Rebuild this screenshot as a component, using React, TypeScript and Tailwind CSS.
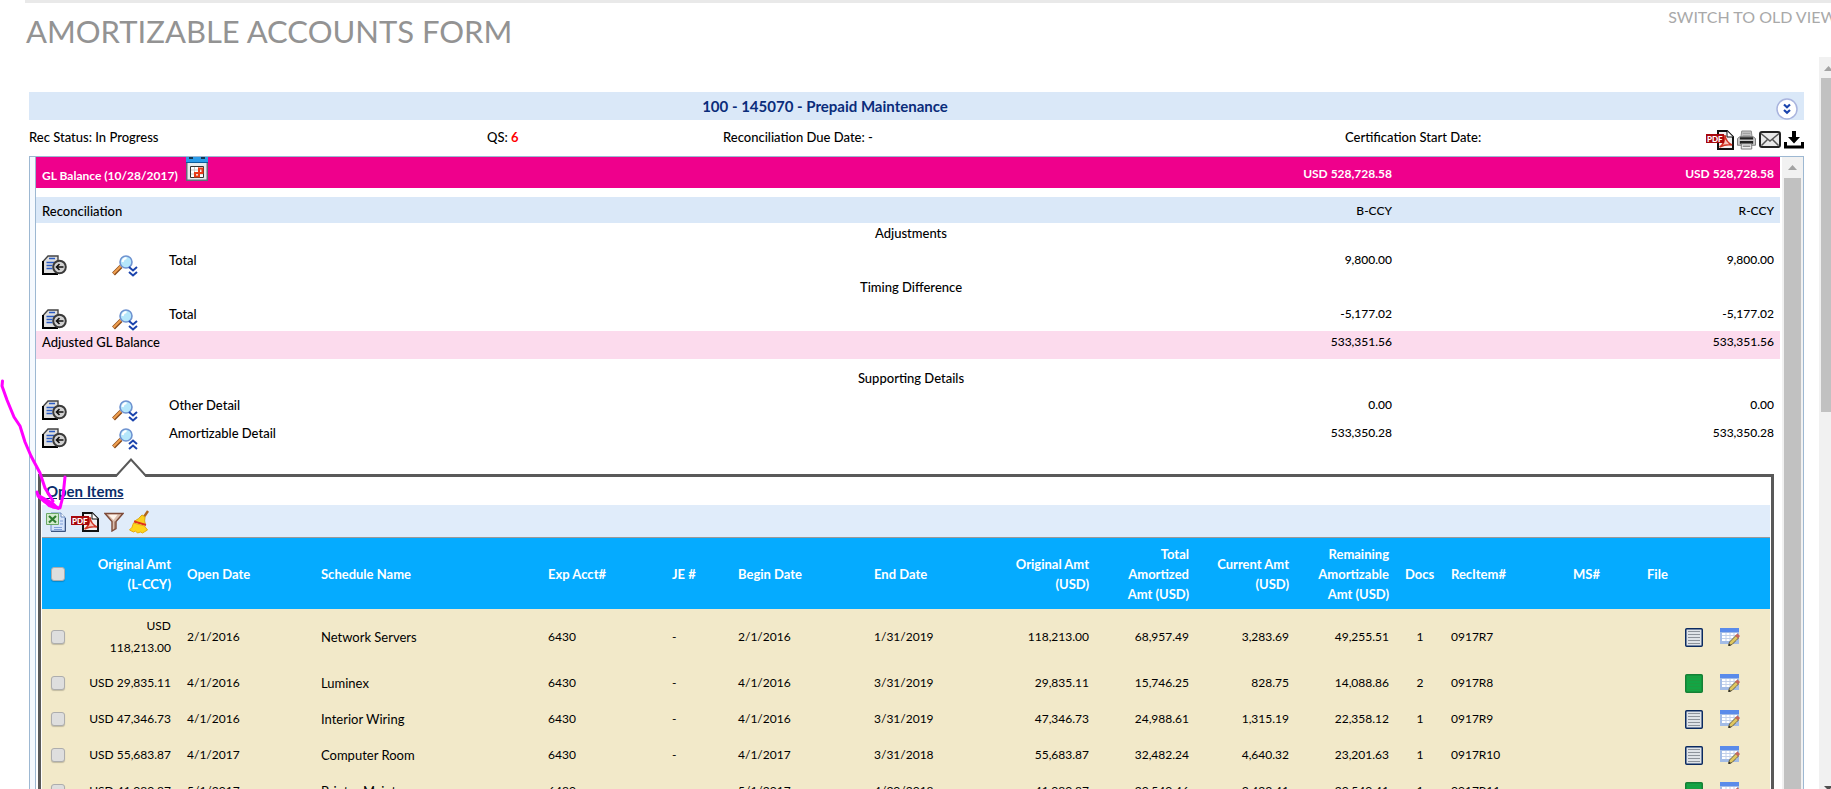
import { ReactNode } from 'react'

interface OpenItem {
  original: string
  openDate: string
  schedule: string
  account: string
  begin: string
  end: string
  originalUsd: string
  amortized: string
  current: string
  remaining: string
  docs: number
  recItem: string
  flagged?: boolean
}

const openItems: OpenItem[] = [
  { original: '118,213.00', openDate: '2/1/2016', schedule: 'Network Servers', account: '6430', begin: '2/1/2016', end: '1/31/2019', originalUsd: '118,213.00', amortized: '68,957.49', current: '3,283.69', remaining: '49,255.51', docs: 1, recItem: '0917R7' },
  { original: '29,835.11', openDate: '4/1/2016', schedule: 'Luminex', account: '6430', begin: '4/1/2016', end: '3/31/2019', originalUsd: '29,835.11', amortized: '15,746.25', current: '828.75', remaining: '14,088.86', docs: 2, recItem: '0917R8', flagged: true },
  { original: '47,346.73', openDate: '4/1/2016', schedule: 'Interior Wiring', account: '6430', begin: '4/1/2016', end: '3/31/2019', originalUsd: '47,346.73', amortized: '24,988.61', current: '1,315.19', remaining: '22,358.12', docs: 1, recItem: '0917R9' },
  { original: '55,683.87', openDate: '4/1/2017', schedule: 'Computer Room', account: '6430', begin: '4/1/2017', end: '3/31/2018', originalUsd: '55,683.87', amortized: '32,482.24', current: '4,640.32', remaining: '23,201.63', docs: 1, recItem: '0917R10' },
  { original: '41,080.87', openDate: '5/1/2017', schedule: 'Printer Maint', account: '6480', begin: '5/1/2017', end: '4/30/2018', originalUsd: '41,080.87', amortized: '20,540.46', current: '3,423.41', remaining: '20,540.41', docs: 1, recItem: '0917R11', flagged: true },
]

function IconButton({ label, children }: { label: string; children: ReactNode }) {
  return (
    <button type="button" aria-label={label} className="block shrink-0 cursor-pointer">
      {children}
    </button>
  )
}

function PdfIcon() {
  return (
    <svg width="28" height="20" viewBox="0 0 28 20">
      <path d="M12 1h9l6 6v12H12z" fill="#f1f1f1" stroke="#111" strokeWidth="2" />
      <path d="M21 1v6h6" fill="#fff" stroke="#111" />
      <path d="M13.500 17c3.500-2 5.500-6 5.500-12 .5 5 3 8 7 10-5-1-8 0-12.500 2z" fill="#f7c4bb" stroke="#cf3423" strokeWidth="1.600" />
      <path d="M0 4h18v9H0z" fill="#a8090d" />
      <text x="1" y="11.500" fill="#fff" fontSize="8" fontWeight="900">PDF</text>
    </svg>
  )
}

function PrinterIcon() {
  return (
    <svg width="19" height="20" viewBox="0 0 20 20">
      <path d="M5 .5h10l1 7H4z" fill="#c4c4c4" stroke="#8a8a8a" />
      <path d="M6 3h8M6 5.500h8" stroke="#999" />
      <path d="M.5 8.500L3 6.500h14l2.500 2v7H.5z" fill="#c9c9c9" stroke="#777" />
      <path d="M3 7h14v2.500H3zM3 11h14v3H3z" fill="#222" />
      <path d="M4.500 14h11v5.500h-11z" fill="#f0f0f0" stroke="#777" />
      <path d="M6 16.500h8" stroke="#555" />
    </svg>
  )
}

function MailIcon() {
  return (
    <svg width="22" height="18" viewBox="0 0 22 18">
      <rect x="1" y="1" width="20" height="15" rx="2" fill="#e9e9e9" stroke="#222" strokeWidth="2" />
      <path d="M2 2.500l9 7.500 9-7.500M2.500 14.500l6-6M19.500 14.500l-6-6" fill="none" stroke="#555" strokeWidth="1.500" />
    </svg>
  )
}

function DownloadIcon() {
  return (
    <svg width="20" height="18" viewBox="0 0 20 18">
      <path d="M8 0h4v6h4l-6 6.500L4 6h4z" fill="#000" />
      <path d="M1.500 11v5h17v-5" fill="none" stroke="#000" strokeWidth="3" />
    </svg>
  )
}

function ExpandIcon() {
  return (
    <svg width="22" height="22" viewBox="0 0 22 22">
      <circle cx="11" cy="11" r="10" fill="#fff" stroke="#a9b4de" strokeWidth="1.500" />
      <path d="M8 6.500l3 2.800 3-2.800M8 12l3 2.800 3-2.800" fill="none" stroke="#1b44ad" strokeWidth="2.200" />
    </svg>
  )
}

function CalendarIcon() {
  return (
    <svg width="22" height="24" viewBox="0 0 22 24">
      <path d="M0 5h22v19H0z" fill="#5f6e78" />
      <path d="M1.500 6h19v16.500h-19z" fill="#e6ebee" />
      <path d="M0 0h22v5H0z" fill="#2b9be8" />
      <path d="M0 5.500h22" stroke="#0b5c9c" />
      <path d="M3 1h4M15 1h4" stroke="#14364f" strokeWidth="2" />
      <path d="M4.500 9.500h13v11h-13z" fill="#fff" stroke="#333" />
      <path d="M5 13h12M5 17h12M8.500 10v10M12.500 10v10" stroke="#c8c8c8" />
      <path d="M9 16h4v3.500H9zM13 11.500h3.500V16H13z" fill="none" stroke="#ea3a16" strokeWidth="2" />
    </svg>
  )
}

function ReturnDocIcon() {
  return (
    <svg width="25" height="21" viewBox="0 0 25 21">
      <path d="M1 19V6l5-5h10v5l-2 13z" fill="#dedede" />
      <path d="M1 19V6.500L6 1h10v5" fill="none" stroke="#444" strokeWidth="1.400" />
      <path d="M1 6v13h15" fill="none" stroke="#000" strokeWidth="2" />
      <path d="M7 3.500h6M4.500 7.500h8M4.500 10.500h6M4.500 13.500h6" stroke="#2b5cc4" strokeWidth="1.500" />
      <circle cx="17.500" cy="12" r="6.300" fill="#d2d2d2" stroke="#3a3a3a" strokeWidth="2" />
      <path d="M21.500 12h-7M17.500 9L14.500 12l3 3" fill="none" stroke="#111" strokeWidth="1.600" />
    </svg>
  )
}

function MagnifierIcon({ up }: { up?: boolean }) {
  return (
    <svg width="26" height="22" viewBox="0 0 26 22">
      <path d="M1.500 19L9 11.500" stroke="#8a4b1b" strokeWidth="4" />
      <path d="M1.500 18.500L9 11" stroke="#f0a050" strokeWidth="2.200" />
      <circle cx="14" cy="7" r="6" fill="#b5e7fb" stroke="#6f93d0" strokeWidth="1.600" />
      <path d="M10.500 7q.5-3.500 4-4" fill="none" stroke="#fff" strokeWidth="2" />
      {up ? (
        <path d="M17 16l4-3.500 4 3.500M17 21l4-3.500 4 3.500" fill="none" stroke="#1b44ad" strokeWidth="2" />
      ) : (
        <path d="M17 12l4 3.500 4-3.500M17 17l4 3.500 4-3.500" fill="none" stroke="#1b44ad" strokeWidth="2" />
      )}
    </svg>
  )
}

function ExcelIcon() {
  return (
    <svg width="20" height="20" viewBox="0 0 20 20">
      <path d="M5 1h10l4 4v14H5z" fill="#d5e3fa" stroke="#6b8abf" />
      <path d="M19.500 6v13.500H5" fill="none" stroke="#3d5580" />
      <path d="M15 1v4h4" fill="#fff" stroke="#6b8abf" />
      <path d="M8 15.500h8M8 17.500h8M14 9h3M14 12h3" stroke="#7f9fd8" />
      <path d="M.5 1.500h12v11H.5z" fill="#d4ecce" stroke="#6aa865" />
      <path d="M3 4l7 6.500M10 4l-7 6.500" stroke="#2e7d2f" strokeWidth="2.200" />
    </svg>
  )
}

function FilterIcon() {
  return (
    <svg width="20" height="20" viewBox="0 0 20 20">
      <path d="M1 1.500h18l-7 8v7l-4 2.500V9.500z" fill="#dcc0b0" stroke="#7d4a38" strokeWidth="1.400" />
      <path d="M4.500 2.700h9L9.500 8z" fill="#fff3ea" />
      <path d="M11 9.500V17" stroke="#8b5a48" />
    </svg>
  )
}

function BroomIcon() {
  return (
    <svg width="20" height="24" viewBox="0 0 20 24">
      <path d="M19 1l-4.500 6.500" stroke="#b0651d" strokeWidth="2.400" />
      <path d="M13 5q2 .5 3 2.500-1 3 .5 7.500L5 11.500Q10 9 13 5z" fill="#fbd01c" stroke="#dda70d" />
      <path d="M5 11.500l12 3.500" stroke="#e1301b" strokeWidth="2" />
      <path d="M4.500 13q-1 5-4 7l4 2 2-1 2 2 3-1 2 1 5-3-3-4z" fill="#ffd51c" stroke="#e7ac0c" />
    </svg>
  )
}

function NoteIcon({ flagged }: { flagged?: boolean }) {
  return (
    <svg width="18" height="19" viewBox="0 0 18 19">
      <rect x=".75" y=".75" width="16.500" height="17.500" rx="1" fill={flagged ? '#13a544' : '#dfe3e8'} stroke={flagged ? '#168035' : '#0b2a60'} strokeWidth="1.500" />
      <path
        d="M3 3.500h12M3 6.500h12M3 9.500h12M3 12.500h12M3 15.500h12"
        stroke={flagged ? '#1e9c40' : '#8d939b'}
      />
    </svg>
  )
}

function EditIcon() {
  return (
    <svg width="20" height="20" viewBox="0 0 20 20">
      <path d="M0 1h19v16H0z" fill="#a3bce6" />
      <path d="M0 1h19v4H0z" fill="#5a8bea" />
      <path d="M2 6h15v8H2z" fill="#fff" />
      <path d="M2 8.500h15M2 11.500h15M6 6v8M10 6v8M14 6v8" stroke="#c3d1ea" />
      <path d="M8.500 18.500l1-3.500 6.500-6.500 2.500 2.500-6.500 6.500z" fill="#e0c75e" stroke="#6b6342" />
      <path d="M15 8.500l2.500-2 2.500 2.500-2 2.500z" fill="#c5675c" />
      <path d="M8.500 19l.5-2.500 2 2z" fill="#222" />
    </svg>
  )
}

function Check({ label }: { label: string }) {
  return (
    <input
      type="checkbox"
      aria-label={label}
      className="mx-auto block size-[14px] appearance-none rounded-[3px] border border-[#adadad] bg-[#dedede] shadow-[0_1px_1px_rgba(0,0,0,0.2)]"
    />
  )
}

function SectionRow({ title }: { title: string }) {
  return (
    <tr className="h-[27px]">
      <td colSpan={5} className="pl-1.5 text-center text-[13px]">{title}</td>
    </tr>
  )
}

function DetailRow({ title, base, reporting, open }: { title: string; base: string; reporting: string; open?: boolean }) {
  return (
    <tr className="h-[27px]">
      <td className="pl-1.5">
        <div className="h-[27px] pt-[5px]">
          <IconButton label={`Back to ${title}`}><ReturnDocIcon /></IconButton>
        </div>
      </td>
      <td className="pl-1.5">
        <div className="h-[27px] pt-[5px]">
          <IconButton label={`Show ${title}`}><MagnifierIcon up={open} /></IconButton>
        </div>
      </td>
      <td className="pl-1.5 text-[13px]">{title}</td>
      <td className="pr-1.5 text-right">{base}</td>
      <td className="pr-1.5 text-right">{reporting}</td>
    </tr>
  )
}

function Summary() {
  return (
    <table className="w-full table-fixed border-collapse text-left leading-5 font-medium [&_td]:align-top [&_th]:font-medium">
      <colgroup>
        <col className="w-[70px]" />
        <col className="w-[57px]" />
        <col />
        <col className="w-[382px]" />
        <col className="w-[382px]" />
      </colgroup>
      <thead>
        <tr className="h-[31px] bg-[#ef008c] text-white [&>th]:font-bold">
          <th colSpan={3} className="pl-1.5 align-top">
            <div className="flex h-[31px] items-start gap-2">
              <span className="pt-[9px]">GL Balance (10/28/2017)</span>
              <IconButton label="Choose date"><CalendarIcon /></IconButton>
            </div>
          </th>
          <th className="pt-0.5 pr-1.5 text-right">USD 528,728.58</th>
          <th className="pt-0.5 pr-1.5 text-right">USD 528,728.58</th>
        </tr>
        <tr className="h-[9px]"><td colSpan={5} /></tr>
        <tr className="h-[26px] bg-[#dae8f8] [&>th]:pt-0.5">
          <th colSpan={3} className="pl-1.5 text-[13px]">Reconciliation</th>
          <th className="pr-1.5 text-right">B-CCY</th>
          <th className="pr-1.5 text-right">R-CCY</th>
        </tr>
      </thead>
      <tbody>
        <SectionRow title="Adjustments" />
        <DetailRow title="Total" base="9,800.00" reporting="9,800.00" />
        <SectionRow title="Timing Difference" />
        <DetailRow title="Total" base="-5,177.02" reporting="-5,177.02" />
        <tr className="h-[28px] bg-[#fcdbed] [&>td]:pt-px">
          <td colSpan={3} className="pl-1.5 text-[13px]">Adjusted GL Balance</td>
          <td className="pr-1.5 text-right">533,351.56</td>
          <td className="pr-1.5 text-right">533,351.56</td>
        </tr>
        <tr className="h-[9px]"><td colSpan={5} /></tr>
        <SectionRow title="Supporting Details" />
        <DetailRow title="Other Detail" base="0.00" reporting="0.00" />
        <tr className="h-px"><td colSpan={5} /></tr>
        <DetailRow title="Amortizable Detail" base="533,350.28" reporting="533,350.28" open />
      </tbody>
    </table>
  )
}

function OpenItemsTable() {
  return (
    <table className="w-full table-fixed border-collapse text-left [&_td]:px-2 [&_th]:px-2">
      <colgroup>
        <col className="w-[32px]" />
        <col className="w-[105px]" />
        <col className="w-[134px]" />
        <col className="w-[227px]" />
        <col className="w-[124px]" />
        <col className="w-[66px]" />
        <col className="w-[136px]" />
        <col className="w-[131px]" />
        <col className="w-[100px]" />
        <col className="w-[100px]" />
        <col className="w-[100px]" />
        <col className="w-[100px]" />
        <col className="w-[46px]" />
        <col className="w-[122px]" />
        <col className="w-[74px]" />
        <col className="w-[38px]" />
        <col className="w-[35px]" />
        <col className="w-[58px]" />
      </colgroup>
      <thead className="bg-[#05abff] text-[13px] leading-5 text-white">
        <tr className="h-[71px] [&>th]:whitespace-nowrap">
          <th><Check label="Select all items" /></th>
          <th className="text-right">Original Amt<br />(L-CCY)</th>
          <th>Open Date</th>
          <th>Schedule Name</th>
          <th>Exp Acct#</th>
          <th>JE #</th>
          <th>Begin Date</th>
          <th>End Date</th>
          <th className="text-right">Original Amt<br />(USD)</th>
          <th className="text-right">Total<br />Amortized<br />Amt (USD)</th>
          <th className="text-right">Current Amt<br />(USD)</th>
          <th className="text-right">Remaining<br />Amortizable<br />Amt (USD)</th>
          <th>Docs</th>
          <th>RecItem#</th>
          <th>MS#</th>
          <th>File</th>
          <th />
          <th />
        </tr>
      </thead>
      <tbody className="bg-[#f2e9c9] leading-[22px]">
        {openItems.map((item, i) => (
          <tr key={item.recItem} className={i === 0 ? 'h-[56px]' : 'h-[36px]'}>
            <td><Check label={`Select ${item.schedule}`} /></td>
            <td className="text-right">USD {i === 0 && <br />}{item.original}</td>
            <td>{item.openDate}</td>
            <td className="text-[13px]">{item.schedule}</td>
            <td>{item.account}</td>
            <td>-</td>
            <td>{item.begin}</td>
            <td>{item.end}</td>
            <td className="text-right">{item.originalUsd}</td>
            <td className="text-right">{item.amortized}</td>
            <td className="text-right">{item.current}</td>
            <td className="text-right">{item.remaining}</td>
            <td className="text-center">{item.docs}</td>
            <td>{item.recItem}</td>
            <td />
            <td />
            <td><IconButton label={`Notes for ${item.recItem}`}><NoteIcon flagged={item.flagged} /></IconButton></td>
            <td><IconButton label={`Edit ${item.recItem}`}><EditIcon /></IconButton></td>
          </tr>
        ))}
      </tbody>
    </table>
  )
}

function OpenItemsPanel() {
  return (
    <div className="relative mt-6 mr-1.5 ml-0.5 border-[3px] border-b-0 border-[#595959] pr-px pl-px">
      {/* Pointer up to the expanded row */}
      <svg className="absolute -top-[20px] left-[73px]" width="36" height="20" viewBox="0 0 36 20">
        <path d="M2 20L17 3.500 32 20z" fill="#fff" />
        <path d="M1 19h1L17 2.500 32 19h4" fill="none" stroke="#595959" strokeWidth="2" />
      </svg>
      <div className="flex h-[28px] items-center pl-1">
        <a href="#open-items" className="text-[15px] font-bold text-[#0a2d6b] underline">Open Items</a>
      </div>
      <div className="flex h-[33px] items-center gap-[5px] border-b border-[#999] bg-[#e0ecfa] pt-0.5 pl-1">
        <IconButton label="Export to Excel"><ExcelIcon /></IconButton>
        <IconButton label="Export to PDF"><PdfIcon /></IconButton>
        <IconButton label="Filter"><FilterIcon /></IconButton>
        <IconButton label="Clear filter"><BroomIcon /></IconButton>
      </div>
      <OpenItemsTable />
    </div>
  )
}

export default function App() {
  return (
    <div className="relative h-screen overflow-hidden bg-white font-['Lato',sans-serif] text-[12px] text-black">
      <div className="flex h-full w-[calc(100%+6px)] flex-col">
        <div className="ml-[25px] h-[3px] shrink-0 bg-[#e9e9e9]" />
        <header className="flex h-[54px] shrink-0 items-start justify-between pl-[26px]">
          <h1 className="pt-2 text-[31px] leading-10 text-[#939393]">AMORTIZABLE ACCOUNTS FORM</h1>
          <a href="#old-view" className="pt-0.5 text-[16px] leading-6 text-[#a9a9a9]">SWITCH TO OLD VIEW</a>
        </header>

        <div className="flex min-h-0 flex-1">
          <main className="flex min-w-0 flex-1 flex-col pt-[35px] pr-[15px] pl-[29px]">
            <div className="flex h-[28px] shrink-0 items-center bg-[#dae8f8]">
              <h2 className="flex-1 pl-[6px] text-center text-[15px] font-bold text-[#0a2d7b]">100 - 145070 - Prepaid Maintenance</h2>
              <div className="flex w-[189px] justify-end self-end pr-1.5">
                <IconButton label="Expand details"><ExpandIcon /></IconButton>
              </div>
            </div>

            <div className="grid h-[36px] shrink-0 grid-cols-[458fr_236fr_622fr_459fr] items-center text-[13px] font-medium">
              <div>Rec Status: In Progress</div>
              <div>QS: <span className="font-bold text-[#f00]">6</span></div>
              <div>Reconciliation Due Date: -</div>
              <div className="flex items-center justify-between">
                <span>Certification Start Date:</span>
                <span className="flex items-center gap-[3px] pt-1">
                  <IconButton label="Export form to PDF"><PdfIcon /></IconButton>
                  <IconButton label="Print"><PrinterIcon /></IconButton>
                  <IconButton label="Email"><MailIcon /></IconButton>
                  <IconButton label="Download"><DownloadIcon /></IconButton>
                </span>
              </div>
            </div>

            <div className="flex min-h-0 flex-1 overflow-hidden border border-b-0 border-[#9db8d2] bg-[#f5f9fe] pl-[5px]">
              <div className="min-w-0 flex-1 border-l border-[#9db8d2] bg-white pr-0.5">
                <Summary />
                <OpenItemsPanel />
              </div>
              <div className="flex w-[21px] flex-col items-center bg-[#f1f1f1]">
                <svg className="my-[7px] shrink-0" width="9" height="7" viewBox="0 0 9 7">
                  <path d="M0 6L4.500 1 9 6z" fill="#a3a3a3" />
                </svg>
                <div className="w-[17px] flex-1 bg-[#c1c1c1]" />
              </div>
            </div>
          </main>

          <div className="flex w-[18px] shrink-0 flex-col items-center justify-between bg-[#f1f1f1]">
            <svg className="mt-2 mb-[6px] shrink-0" width="9" height="7" viewBox="0 0 9 7">
              <path d="M0 6L4.500 1 9 6z" fill="#a3a3a3" />
            </svg>
            <div className="w-[14px] flex-[334] bg-[#c1c1c1]" />
            <div className="flex-[374]" />
            <svg className="shrink-0" width="9" height="3" viewBox="0 0 9 3">
              <path d="M0 0h9L6 3H3z" fill="#505050" />
            </svg>
          </div>
        </div>
      </div>

      {/* Hand-drawn arrow pointing at the Excel export */}
      <svg className="pointer-events-none absolute top-[376px] left-0" width="80" height="136" viewBox="0 0 80 136">
        <path
          d="M2.500 5L2 10l5 14 7 17 6 9 5 16 6 14 9 17 5 15 8 13M37 116l1 4 7 6 8 5 7 1 3-12 2-19"
          fill="none"
          stroke="#ff00ff"
          strokeWidth="3"
          strokeLinecap="round"
          strokeLinejoin="round"
        />
        <path d="M37 118l16 9 6 6-10-3z" fill="#ff00ff" stroke="#ff00ff" strokeWidth="2" />
      </svg>
    </div>
  )
}
